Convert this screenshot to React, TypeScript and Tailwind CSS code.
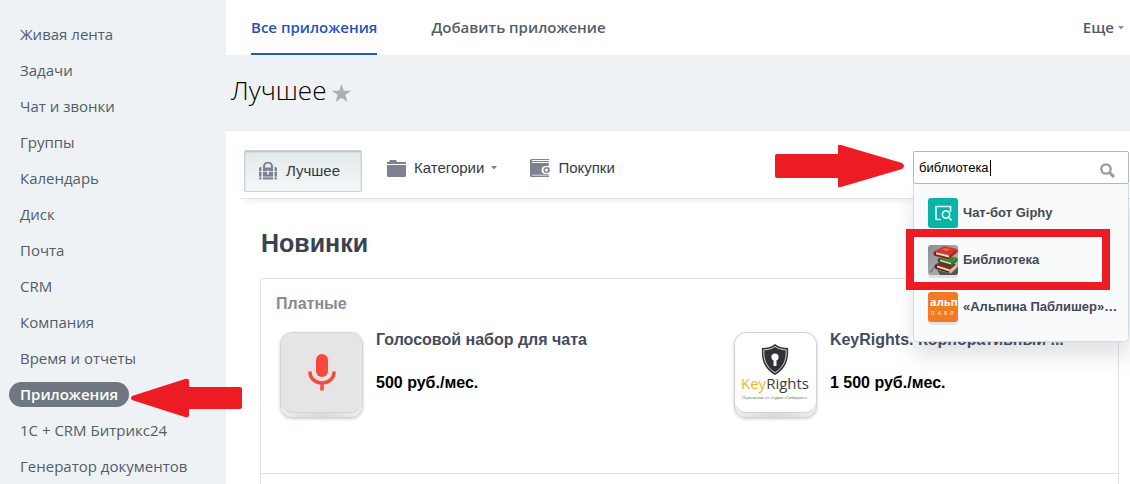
import React from "react";

const MENU = [
  "Живая лента",
  "Задачи",
  "Чат и звонки",
  "Группы",
  "Календарь",
  "Диск",
  "Почта",
  "CRM",
  "Компания",
  "Время и отчеты",
  "Приложения",
  "1С + CRM Битрикс24",
  "Генератор документов",
];

const ACTIVE = "Приложения";

const Caret = ({ className = "" }) => (
  <svg viewBox="0 0 6 4" className={`h-1 w-1.5 ${className}`} fill="currentColor">
    <path d="M0 0h6L3 3.5z" />
  </svg>
);

const BagIcon = () => (
  <svg viewBox="0 0 18 18" className="h-[18px] w-[18px]" fill="#7c8292">
    <path d="M5 6V4.500a4 4 0 0 1 8 0V6" fill="none" stroke="#7c8292" strokeWidth="2" />
    <path d="M1.500 5H2.500v12.500h-1A1.500 1.500 0 0 1 0 16V6.500A1.500 1.500 0 0 1 1.500 5zM15.500 5h1A1.500 1.500 0 0 1 18 6.500V16a1.500 1.500 0 0 1-1.500 1.500h-1z" />
    <path d="M4 5.500h10v12H4z" />
    <path d="M0 9.500h18M0 15h18" stroke="#e9eef0" strokeWidth=".8" />
    <path d="M8.200 8.500h1.600v4H8.200z" fill="#f3f6f7" />
  </svg>
);

const FolderIcon = () => (
  <svg viewBox="0 0 20 17" className="h-[17px] w-5" fill="#7c8292">
    <path d="M0 3V2h2l1-2h6l1 2h9v2H0z" />
    <path d="M0 5h19v10.500a1.500 1.500 0 0 1-1.500 1.500h-16A1.500 1.500 0 0 1 0 15.500z" />
  </svg>
);

const WalletIcon = () => (
  <svg viewBox="0 0 20 18" className="h-[18px] w-5" fill="#7c8292">
    <path d="M1.500 0H19v1H2v1h17v1H2v1h16.500v3H15a4 4 0 0 0 0 8h3.500v.5H2v1h17V18H1.500A1.500 1.500 0 0 1 0 16.500v-15A1.500 1.500 0 0 1 1.500 0z" />
    <path d="M1 4h17.500v3H15.500a4 4 0 0 0 0 8h3v.5H1z" />
    <circle cx="16.500" cy="11" r="2.300" fill="none" stroke="#7c8292" strokeWidth="1.500" />
    <path d="M18.500 8.500h1v5h-1z" />
  </svg>
);

const GiphyIcon = () => (
  <svg viewBox="0 0 30 30" className="h-[30px] w-[30px]">
    <rect width="30" height="30" rx="3" fill="#06b5a5" />
    <path
      d="M13 21.500H8V8.500h14.500V14"
      fill="none"
      stroke="#e8fbf9"
      strokeWidth="1.700"
    />
    <circle cx="18" cy="16.500" r="3.600" fill="none" stroke="#e8fbf9" strokeWidth="1.700" />
    <path d="m20.500 19 3 3.500" stroke="#e8fbf9" strokeWidth="1.800" />
  </svg>
);

const BooksIcon = () => (
  <svg viewBox="0 0 30 33" className="h-[33px] w-[30px]">
    <defs>
      <linearGradient id="desk" x1="0" y1="0" x2="1" y2="1">
        <stop offset="0" stopColor="#8a8e94" />
        <stop offset="1" stopColor="#b9bbbd" />
      </linearGradient>
    </defs>
    <rect y="3" width="30" height="30" rx="4" fill="#dfe3e9" />
    <rect width="30" height="30" rx="3" fill="url(#desk)" />
    <path d="m9 25 14 3.500 7-7V27a3 3 0 0 1-3 3H12z" fill="#55514d" />
    <path d="m8 19 6-3 14 3.500-6 5.500z" fill="#7e2c20" />
    <path d="M8 19c-2 1-2 4 0 5l13.500 4v-3z" fill="#5d1a14" />
    <path d="m9 20.500 12.500 4v2L9 22.500z" fill="#e7d9b0" />
    <path d="m21.500 25 7-5.500V23l-7 5z" fill="#d2c295" />
    <path d="m11 13 6-3 12.500 3-6.500 6z" fill="#3f8a3a" />
    <path d="M11 13c-2 1-2 3.500 0 4.500l12 3.500v-2.500z" fill="#23502a" />
    <path d="m12 14.500 11 3.500v1.500L12 16.300z" fill="#e3dcb6" />
    <path d="m23 19 6.500-6v3L23 21.500z" fill="#2c6b30" />
    <path d="m7 6 9-5 13.500 3L21 10z" fill="#d8352a" />
    <path d="M7 6c-2 1.200-2 4 0 5l14 3v-3z" fill="#8e1913" />
    <path d="m8 7.300 13 3.500v1.800L8 9.300z" fill="#f2e5bd" />
    <path d="m21 10 8.500-6v3L21 14z" fill="#b52219" />
    <path d="m14 4.500 3-1.500 5 1.200-3 2z" fill="#e9693c" />
    <path d="M8 22c-5 0-2 4-6 5" fill="none" stroke="#40434a" strokeWidth=".8" />
  </svg>
);

const AlpinaIcon = () => (
  <svg viewBox="0 0 30 33" className="h-[33px] w-[30px]">
    <rect y="3" width="30" height="30" rx="4" fill="#e1e5ea" />
    <rect width="30" height="30" rx="3" fill="#f27a21" />
    <text x="2" y="14" fontSize="11" fontWeight="700" fill="#fff" fontFamily="Open Sans, sans-serif">
      альп
    </text>
    <text x="3" y="23" fontSize="5" fontWeight="600" fill="#fde3cf" letterSpacing="3" fontFamily="Open Sans, sans-serif">
      ПАБЛ
    </text>
  </svg>
);

const MicIcon = () => (
  <svg viewBox="0 0 28 37" className="h-[37px] w-7" fill="#f9493f">
    <rect x="8" y="0" width="12" height="23" rx="6" />
    <path
      d="M2 17.500v1a12 10.500 0 0 0 24 0v-1M14 29v7.500"
      fill="none"
      stroke="#f9493f"
      strokeWidth="3.500"
    />
  </svg>
);

const KeyRightsLogo = () => (
  <svg viewBox="0 0 80 78" className="h-[78px] w-20">
    <path d="M40 10c4 3 8 4 13 4 1 13-3 21-13 27-10-6-14-14-13-27 5 0 9-1 13-4z" fill="#303236" />
    <path
      d="M40 12.500c3.500 2.300 7 3.200 11.200 3.400.5 10.600-3 17.600-11.200 22.800-8.200-5.200-11.700-12.200-11.200-22.800 4.200-.2 7.700-1.100 11.200-3.400z"
      fill="none"
      stroke="#e8e8e8"
      strokeWidth=".9"
    />
    <circle cx="40" cy="23" r="3.600" fill="#fff" />
    <path d="M38.500 25h3v7h-3z" fill="#fff" />
    <text x="6" y="55" fontSize="15" fontFamily="Open Sans, sans-serif" fill="#3a3d42">
      <tspan fill="#efb71c">Key</tspan>Rights
    </text>
    <text x="7" y="65" fontSize="4" fontFamily="Open Sans, sans-serif" fill="#55585d">
      Парольник от студии «Сибирикс»
    </text>
  </svg>
);

const FOUND = [
  { name: "Чат-бот Giphy", icon: <GiphyIcon /> },
  { name: "Библиотека", icon: <BooksIcon />, marked: true },
  { name: "«Альпина Паблишер»…", icon: <AlpinaIcon /> },
];

const APPS = [
  {
    name: "Голосовой набор для чата",
    price: "500 руб./мес.",
    icon: <MicIcon />,
    tile: "bg-[#e5e5e5]",
  },
  {
    name: "KeyRights. Корпоративный ...",
    price: "1 500 руб./мес.",
    icon: <KeyRightsLogo />,
    tile: "bg-white",
  },
];

const Sidebar = () => (
  <nav className="w-[226px] shrink-0 pt-4 font-['Open_Sans',sans-serif] text-[15px] text-[#535c69]">
    <ul>
      {MENU.map((item) => (
        <li key={item} className="flex h-9 items-center pl-[9px]">
          {item === ACTIVE ? (
            <div className="relative">
              <a
                href="#"
                className="block rounded-full bg-[#6f7782] px-[11px] leading-[25px] font-semibold text-white"
              >
                {item}
              </a>
              <svg
                viewBox="0 0 112 40"
                className="absolute top-[-4px] left-full z-10 ml-0.5 h-10 w-28"
                fill="#ed1c24"
              >
                <path d="M1 18 54 1Q58 0 58 3v6h51q2 0 2 2v18q0 2-2 2H58v6q0 3-4 2L1 22q-2-2 0-4z" />
              </svg>
            </div>
          ) : (
            <a href="#" className="px-[11px]">
              {item}
            </a>
          )}
        </li>
      ))}
    </ul>
  </nav>
);

const Search = () => (
  <div className="relative mt-5 mr-px w-[216px]">
    <svg
      viewBox="0 0 130 44"
      className="absolute top-[-7px] right-full mr-2 h-11 w-[130px]"
      fill="#ed1c24"
    >
      <path d="M2 10h61V2q0-2 3-1l61 18q4 3 0 6L66 43q-3 1-3-1v-8H2q-2 0-2-2V12q0-2 2-2z" />
    </svg>
    <input
      type="text"
      aria-label="Поиск приложений"
      defaultValue="библиотека"
      className="block h-[33px] w-full rounded-xs border border-[#b4b8bc] bg-white pr-8 pl-[5px] text-[13px] text-black caret-transparent outline-none"
    />
    <span className="absolute top-[9px] left-[77px] h-4 w-px bg-black" />
    <button type="button" aria-label="Найти" className="absolute top-3 right-3.5">
      <svg viewBox="0 0 15 15" className="h-[15px] w-[15px]" fill="none" stroke="#9b9b9b">
        <circle cx="6" cy="6" r="4.700" strokeWidth="2.300" />
        <path d="m9.500 9.500 4.500 4.500" strokeWidth="3" />
      </svg>
    </button>
    <ul className="absolute top-full left-0 z-10 h-[158px] w-full rounded-b-sm border border-t-0 border-[#d3dce0] bg-[#f8fafc] pt-1.5 shadow-[0_14px_20px_rgba(83,92,105,0.18)]">
      {FOUND.map((app) => (
        <li key={app.name} className="relative">
          <a
            href="#"
            className="flex h-[47px] items-start gap-[5px] pt-2 pl-3.5 text-[13px] leading-[30px] font-bold whitespace-nowrap text-[#424956]"
          >
            {app.icon}
            {app.name}
          </a>
          {app.marked && (
            <span className="absolute top-[-8px] left-[-8px] h-[61px] w-[204px] border-8 border-[#ed1c24]" />
          )}
        </li>
      ))}
    </ul>
  </div>
);

const Toolbar = () => (
  <div className="ml-3.5 flex h-[68px] items-start justify-between border-b border-[#e3e6e8] shadow-[0_5px_8px_-5px_rgba(0,0,0,0.12)]">
    <div className="flex pt-[19px] pl-1 text-[15px] text-[#333a47]">
      <button
        type="button"
        className="flex h-[42px] w-[118px] items-center gap-[9px] rounded-xs border border-[#cbd3d6] bg-linear-to-b from-[#e3e9eb] to-[#f4f7f8] pl-3.5 shadow-[inset_0_1px_2px_rgba(0,0,0,0.2)]"
      >
        <BagIcon />
        Лучшее
      </button>
      <button type="button" className="ml-[25px] flex h-9 items-center gap-[7px]">
        <FolderIcon />
        Категории
        <Caret className="text-[#7c8292]" />
      </button>
      <button type="button" className="ml-[33px] flex h-9 items-center gap-2">
        <WalletIcon />
        Покупки
      </button>
    </div>
    <Search />
  </div>
);

const App = () => {
  return (
    <div className="flex min-h-screen bg-[#eef2f4] font-['Liberation_Sans',Arial,sans-serif]">
      <Sidebar />
      <main className="flex min-w-0 flex-1 flex-col">
        <header className="flex h-[55px] items-stretch bg-white pr-1.5 pl-[25px] font-['Open_Sans',sans-serif] text-[15px] font-semibold text-[#535c69]">
          <a
            href="#"
            className="flex items-center border-b-2 border-[#215fae] pt-0.5 text-[#2753b8]"
          >
            Все приложения
          </a>
          <a href="#" className="ml-[54px] flex items-center">
            Добавить приложение
          </a>
          <button type="button" className="ml-auto flex items-center gap-1">
            Еще
            <Caret className="text-[#8b9098]" />
          </button>
        </header>

        <div className="flex h-[75px] items-center gap-1.5 pl-[5px]">
          <h1 className="pb-1 font-['Open_Sans',sans-serif] text-[26px] font-light text-black">
            Лучшее
          </h1>
          <svg viewBox="0 0 19 18" className="h-[18px] w-[19px]" fill="#a9afb6">
            <path d="m9.500 0 2.300 6.700H19l-5.700 4.200 2.100 7.100-5.900-4.200L3.600 18l2.100-7.100L0 6.700h7.200z" />
          </svg>
        </div>

        <div className="flex flex-1 flex-col border-t border-[#e9ecee] bg-white">
          <Toolbar />
          <h2 className="mt-7 ml-[35px] text-[25px] leading-8 font-bold text-[#3a4150]">
            Новинки
          </h2>
          <section className="mt-[19px] mr-[11px] ml-[34px] flex-1 rounded-t-sm border border-b-0 border-[#dde3e6]">
            <div className="h-[195px] border-b border-[#dde3e6] pt-[13px]">
              <h3 className="ml-[15px] text-base leading-6 font-bold text-[#868b93]">
                Платные
              </h3>
              <div className="mt-4 ml-[19px] grid grid-cols-[13fr_11fr]">
                {APPS.map((app) => (
                  <article key={app.name} className="flex min-w-0 gap-[13px]">
                    <div className="h-[86px] w-[83px] shrink-0 rounded-xl border border-[#cfd4d8] bg-linear-to-r from-[#eceff1] via-[#d6dadd] to-[#eceff1] shadow-[0_1px_3px_rgba(0,0,0,0.2)]">
                      <div
                        className={`flex h-20 items-center justify-center rounded-xl border-b border-[#d0d5d8] ${app.tile}`}
                      >
                        {app.icon}
                      </div>
                    </div>
                    <div className="min-w-0 text-base leading-4 font-bold">
                      <a href="#" className="block whitespace-nowrap text-[#424c5c]">
                        {app.name}
                      </a>
                      <p className="mt-[27px] text-black">{app.price}</p>
                    </div>
                  </article>
                ))}
              </div>
            </div>
          </section>
        </div>
      </main>
    </div>
  );
};

export default App;
